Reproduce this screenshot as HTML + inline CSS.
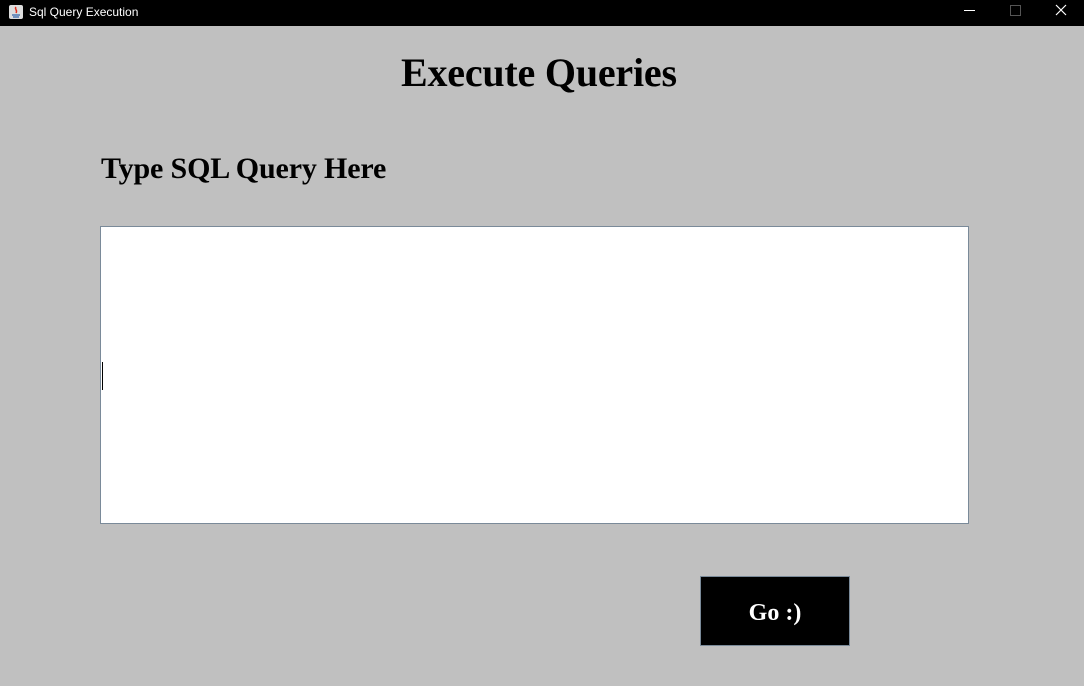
<!DOCTYPE html>
<html><head><style>
body{margin:0;width:1084px;height:686px;background:#c0c0c0;position:relative;overflow:hidden;font-family:"Liberation Serif",serif}
.tb{position:absolute;left:0;top:0;width:1084px;height:26px;background:#000;color:#fff;font-family:"Liberation Sans",sans-serif;font-size:12px}
.tb span{position:absolute;left:29px;top:5px}
.abs{position:absolute;white-space:nowrap;font-weight:bold;color:#000}
</style></head><body>
<div class="tb">
<svg style="position:absolute;left:8px;top:4px" width="16" height="16"><rect x="1" y="1" width="14" height="14" fill="#ddd" rx="2"/><path d="M4 11h8M5 13h6" stroke="#3366aa" stroke-width="1.2"/><path d="M8 3c-2 2 2 3 0 6" stroke="#e0301e" fill="none" stroke-width="1.5"/></svg>
<span>Sql Query Execution</span>
<div style="position:absolute;left:964px;top:10px;width:11px;height:1px;background:#fff"></div>
<div style="position:absolute;left:1010px;top:5px;width:9px;height:9px;border:1px solid #555"></div>
<svg style="position:absolute;left:1055px;top:4px" width="12" height="12"><path d="M1 1L11 11M11 1L1 11" stroke="#fff" stroke-width="1.2"/></svg>
</div>
<div class="abs" style="left:401px;top:49px;font-size:40px;line-height:48px;letter-spacing:-0.2px">Execute Queries</div>
<div class="abs" style="left:101px;top:151px;font-size:30px;line-height:36px;letter-spacing:-0.15px">Type SQL Query Here</div>
<div style="position:absolute;left:100px;top:226px;width:867px;height:296px;background:#fff;border:1px solid #7a8a99"></div>
<div style="position:absolute;left:102px;top:362px;width:1px;height:28px;background:#000"></div>
<div style="position:absolute;left:700px;top:576px;width:148px;height:68px;background:#000;border:1px solid #7a8a99;color:#fff;font-weight:bold;font-size:24px;line-height:72px;text-align:center">Go :)</div>
</body></html>
